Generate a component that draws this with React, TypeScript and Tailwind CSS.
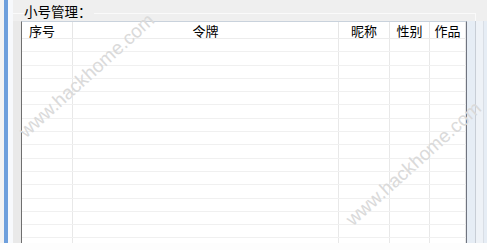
import React from 'react';

const columns = [
  { title: '序号', width: 'w-[51px]', align: 'justify-start pl-[7px]' },
  { title: '令牌', width: 'w-[266px]', align: 'justify-center' },
  { title: '昵称', width: 'w-[51px]', align: 'justify-center' },
  { title: '性别', width: 'w-[40px]', align: 'justify-center' },
  { title: '作品', width: 'w-[36px]', align: 'justify-center' },
];

const rows = Array.from({ length: 16 }, (_, i) => i);

export default function App() {
  return (
    <div
      className="relative w-[487px] h-[250px] overflow-hidden bg-[#fdfdfd] text-black"
      style={{ fontFamily: '"Noto Sans CJK SC", "Liberation Sans", sans-serif' }}
    >
      <div className="flex h-[243px]">
        {/* left edge + blue strip */}
        <div className="w-[4px] shrink-0 bg-[#f3f3f3]" />
        <div className="w-[4px] shrink-0 bg-[#6e9fdc]" />
        <div className="w-[5px] shrink-0 bg-[#f7f9fc]" />

        {/* group box */}
        <div className="flex-1 min-h-0 flex flex-col bg-[#efefef]">
          <div className="relative h-[21px] shrink-0">
            <div className="absolute left-[0px] right-[11px] top-[13px] h-px bg-[#fafafa]" />
            <div className="absolute right-[11px] top-[13px] bottom-0 w-px bg-[#fafafa]" />
            <span className="absolute left-[11px] top-[3px] bg-[#efefef] pr-[2px] text-[13.5px] leading-[17px]">
              小号管理：
            </span>
          </div>

          <div className="flex flex-1 min-h-0">
            <div className="w-[8px] shrink-0 bg-[#e9e9e9]" />
            {/* list view */}
            <div className="w-[446px] shrink-0 flex flex-col bg-white border-l border-r border-t border-l-[#6f6f6f] border-r-[#6f7480] border-t-[#c9d2dc] overflow-hidden">
              <div className="flex shrink-0 h-[17px] border-b border-[#ececec]">
                {columns.map((c) => (
                  <div
                    key={c.title}
                    className={`${c.width} ${c.align} flex items-center border-r border-[#e6e6e6] text-[13px] leading-[16px] pt-[2px]`}
                  >
                    {c.title}
                  </div>
                ))}
              </div>
              {rows.map((r) => (
                <div key={r} className="flex shrink-0 h-[13.3px] border-b border-[#f0f0f0]">
                  {columns.map((c) => (
                    <div key={c.title} className={`${c.width} border-r border-[#e8e8e8]`} />
                  ))}
                </div>
              ))}
            </div>
            <div className="flex-1 flex bg-[#e6edf5]">
              <div className="w-[8px]" />
              <div className="w-px bg-[#c8ced6]" />
              <div className="w-[7px] bg-[#eef2f7]" />
              <div className="w-px bg-[#d9dee5]" />
            </div>
          </div>
        </div>
      </div>

      {/* watermark */}
      <span
        className="pointer-events-none absolute left-[87px] top-[76px] -translate-x-1/2 -translate-y-1/2 -rotate-[42deg] whitespace-nowrap text-[19px] text-[#dadada]"
        style={{ fontFamily: '"Liberation Sans", sans-serif' }}
      >
        www.hackhome.com
      </span>
      <span
        className="pointer-events-none absolute left-[414px] top-[164px] -translate-x-1/2 -translate-y-1/2 -rotate-[42deg] whitespace-nowrap text-[19px] text-[#dadada]"
        style={{ fontFamily: '"Liberation Sans", sans-serif' }}
      >
        www.hackhome.com
      </span>
    </div>
  );
}
